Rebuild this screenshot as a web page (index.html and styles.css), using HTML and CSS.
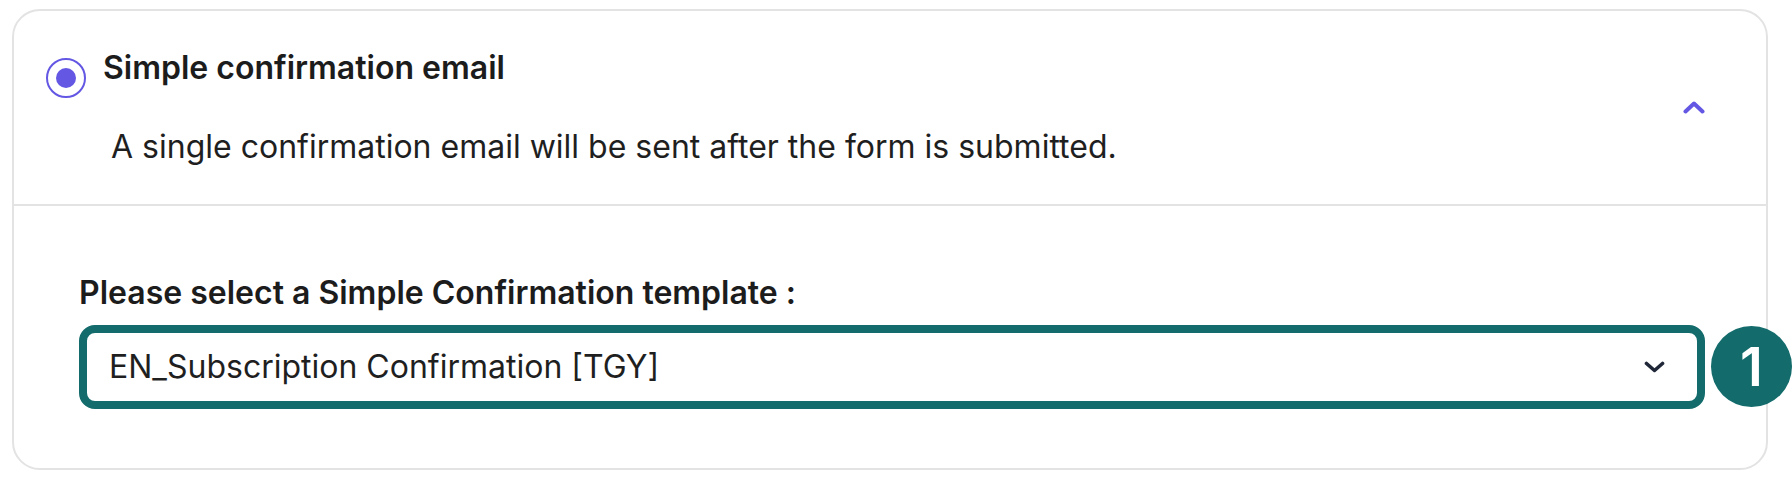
FILE: index.html
```html
<!DOCTYPE html>
<html lang="en">
<head>
<meta charset="utf-8">
<title>Simple confirmation email</title>
<link rel="stylesheet" href="styles.css">
</head>
<body>
<div class="card">
  <div class="card-header">
    <div class="option">
      <div class="option-head">
        <span class="radio"><span class="radio-dot"></span></span>
        <span class="option-title">Simple confirmation email</span>
      </div>
      <p class="option-desc">A single confirmation email will be sent after the form is submitted.</p>
    </div>
    <svg class="chevron-up" width="22" height="13" viewBox="0 0 22 13" aria-hidden="true">
      <path d="M2.5 10.5 L11 2.5 L19.5 10.5" fill="none" stroke="#6357e3" stroke-width="4" stroke-linecap="round" stroke-linejoin="round"/>
    </svg>
  </div>
  <div class="card-body">
    <div class="field-label">Please select a Simple Confirmation template :</div>
    <div class="select">
      <span class="select-value">EN_Subscription Confirmation [TGY]</span>
      <svg class="chevron-down" width="21" height="12" viewBox="0 0 21 12" aria-hidden="true">
        <path d="M2.5 2.5 L10.5 9.5 L18.5 2.5" fill="none" stroke="#1f2738" stroke-width="3.6" stroke-linecap="round" stroke-linejoin="round"/>
      </svg>
      <span class="badge">1</span>
    </div>
  </div>
</div>
</body>
</html>
```
FILE: styles.css
```css
* { box-sizing: border-box; }

html, body {
  margin: 0;
  padding: 0;
  background: #ffffff;
}

body {
  font-family: Inter, "Noto Sans", "Liberation Sans", sans-serif;
  color: #1e1e1e;
  overflow: hidden;
}

.card {
  margin: 9px 0 0 12px;
  width: 1756px;
  height: 461px;
  border: 2px solid #e3e3e3;
  border-radius: 28px;
  background: #ffffff;
}

.card-header {
  display: flex;
  align-items: center;
  padding: 37px 61px 37px 32px;
  border-bottom: 2px solid #e3e3e3;
}

.option {
  flex: 1;
  display: flex;
  flex-direction: column;
}

.option-head {
  display: flex;
  align-items: flex-start;
  gap: 17px;
}

.radio {
  width: 40px;
  height: 40px;
  margin-top: 10px;
  border: 2px solid #6357e3;
  border-radius: 50%;
  display: flex;
  align-items: center;
  justify-content: center;
  flex: none;
}

.radio-dot {
  width: 20px;
  height: 20px;
  border-radius: 50%;
  background: #6357e3;
}

.option-title {
  font-size: 32px;
  line-height: 40px;
  font-weight: 600;
  color: #1c1c1c;
}

.option-desc {
  margin: 29px 0 0 65px;
  font-size: 32px;
  line-height: 40px;
  font-weight: 400;
  color: #1f1f1f;
}

.chevron-up {
  flex: none;
  display: block;
}

.card-body {
  padding: 67px 0 0 65px;
}

.field-label {
  font-size: 32px;
  line-height: 40px;
  font-weight: 600;
  color: #1c1c1c;
  margin-bottom: 12px;
}

.select {
  position: relative;
  width: 1626px;
  height: 84px;
  border: 8px solid #136b6b;
  border-radius: 16px;
  background: #ffffff;
  display: flex;
  align-items: center;
  justify-content: space-between;
  padding: 0 32px 0 22px;
}

.select-value {
  font-size: 32px;
  line-height: 40px;
  color: #1f1f1f;
}

.chevron-down {
  display: block;
  flex: none;
}

.badge {
  position: absolute;
  left: calc(100% + 14px);
  top: -7px;
  width: 81px;
  height: 81px;
  border-radius: 50%;
  background: #136b6b;
  color: #ffffff;
  font-size: 54px;
  font-weight: 600;
  display: flex;
  align-items: center;
  justify-content: center;
}
```
